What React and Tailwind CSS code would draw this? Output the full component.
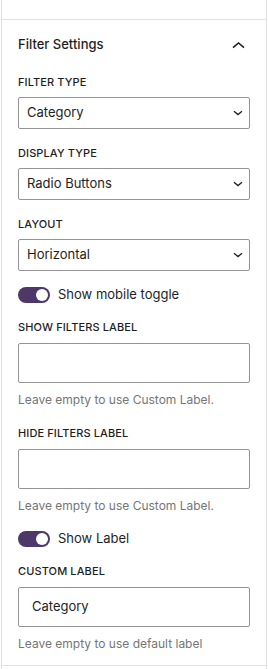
import React from "react";

function ChevronDown() {
  return (
    <svg width="10" height="6" viewBox="0 0 10 6" className="shrink-0" fill="none">
      <polyline points="1,1.2 5,4.6 9,1.2" stroke="#1e1e1e" strokeWidth="1.3" strokeLinejoin="miter" />
    </svg>
  );
}

function ChevronUp() {
  return (
    <svg width="13" height="8" viewBox="0 0 13 8" fill="none">
      <polyline points="1,6.6 6.5,2 12,6.6" stroke="#1e1e1e" strokeWidth="1.6" />
    </svg>
  );
}

function Label({ children, tight }) {
  return (
    <div
      className={
        "text-[11px] leading-4 font-medium uppercase text-[#1e1e1e] tracking-[0.01em] " +
        (tight ? "mb-[7px]" : "mb-2")
      }
    >
      {children}
    </div>
  );
}

function Select({ label, value }) {
  return (
    <div className="mb-4">
      <Label tight>{label}</Label>
      <div className="h-8 border border-[#949494] rounded-[2px] flex items-center justify-between pl-2 pr-[6px]">
        <span className="text-[13px] text-[#1e1e1e]">{value}</span>
        <ChevronDown />
      </div>
    </div>
  );
}

function Toggle({ label }) {
  return (
    <div className="flex items-center gap-2 h-4 mb-4">
      <div className="w-8 h-4 rounded-full bg-[#4d3869] flex items-center justify-end pr-[2px]">
        <div className="w-3 h-3 rounded-full bg-white" />
      </div>
      <span className="text-[13px] text-[#1e1e1e]">{label}</span>
    </div>
  );
}

function TextField({ label, value, help, last }) {
  return (
    <div className={last ? "" : "mb-4"}>
      <Label>{label}</Label>
      <div className="h-10 border border-[#949494] rounded-[2px] flex items-center pl-[13px]">
        <span className="text-[13px] text-[#1e1e1e]">{value}</span>
      </div>
      <div className="mt-2 text-[12px] leading-[18px] text-[#757575]">{help}</div>
    </div>
  );
}

export default function App() {
  return (
    <div
      className="w-[268px] h-[669px] bg-white overflow-hidden"
      style={{ fontFamily: "Inter, 'Noto Sans', sans-serif" }}
    >
      <div className="ml-px mr-px h-full border-l border-r border-[#e0e0e0] flex flex-col">
        <div className="h-[20px] border-b border-[#e0e0e0] shrink-0" />
        <div className="border-b border-[#e0e0e0]">
          <div className="h-[49px] pt-px flex items-center justify-between pl-4 pr-[21px]">
            <span className="text-[13px] font-medium text-[#1e1e1e]">Filter Settings</span>
            <ChevronUp />
          </div>
          <div className="px-4 pt-[5px] pb-3">
            <Select label="Filter Type" value="Category" />
            <Select label="Display Type" value="Radio Buttons" />
            <Select label="Layout" value="Horizontal" />
            <Toggle label="Show mobile toggle" />
            <TextField label="Show Filters Label" value="" help="Leave empty to use Custom Label." />
            <TextField label="Hide Filters Label" value="" help="Leave empty to use Custom Label." />
            <Toggle label="Show Label" />
            <TextField label="Custom Label" value="Category" help="Leave empty to use default label" last />
          </div>
        </div>
      </div>
    </div>
  );
}
